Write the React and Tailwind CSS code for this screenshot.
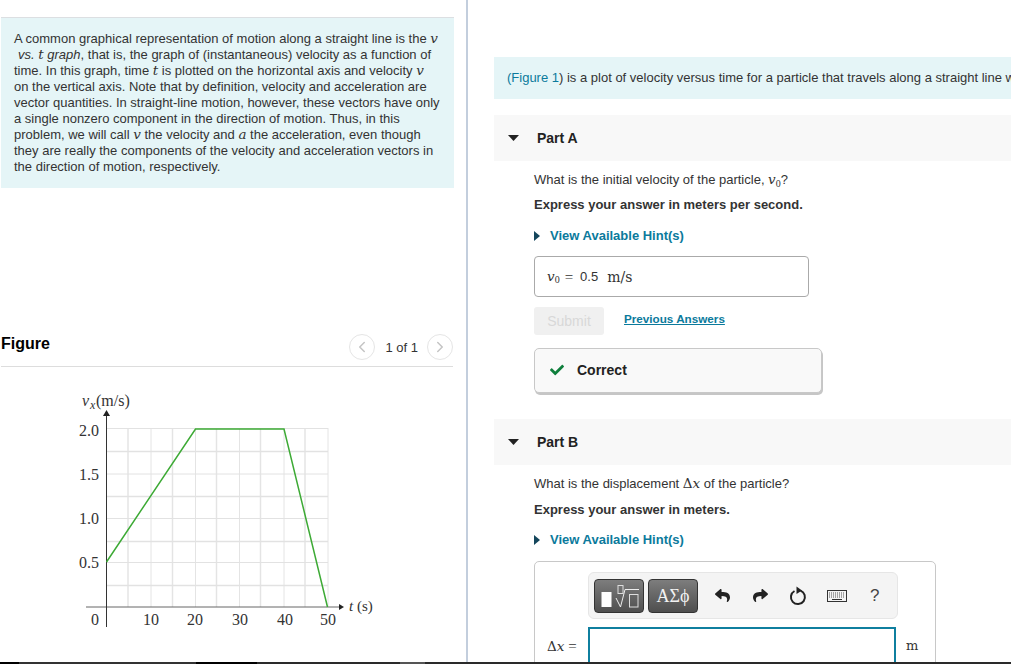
import { ChevronLeft, ChevronRight } from 'lucide-react';
import { FaCheck, FaReply, FaShare } from 'react-icons/fa';

const sans = { fontFamily: '"Liberation Sans", Arial, sans-serif' };

function MathVar({ children }) {
  return <span className="font-['DejaVu_Serif',serif] italic text-[13.5px] leading-none">{children}</span>;
}

function MathSub() {
  return <span className="font-['Liberation_Serif',serif] text-[10px] leading-none relative top-[3px]">0</span>;
}

function DownTriangle() {
  return (
    <svg width="11" height="6" viewBox="0 0 11 6" className="shrink-0">
      <polygon points="0,0 11,0 5.5,6" fill="#222" />
    </svg>
  );
}

function PartHeader({ title }) {
  return (
    <div className="h-[46px] flex items-center pl-[14px] bg-[#f8f8f8]">
      <DownTriangle />
      <span className="ml-[18px] font-bold text-[14px] text-[#222]">{title}</span>
    </div>
  );
}

function HintLink() {
  return (
    <div className="flex items-center h-4 font-bold text-[#0b7a9c]">
      <svg width="6" height="10" viewBox="0 0 6 10" className="mr-[10px]">
        <polygon points="0,0 6,5 0,10" fill="#14465c" />
      </svg>
      View Available Hint(s)
    </div>
  );
}

function PagerButton({ children }) {
  return (
    <div className="w-[26px] h-[26px] rounded-full border border-[#e5e5e5] flex items-center justify-center text-[#c4c4c4]">
      {children}
    </div>
  );
}

function VelocityGraph() {
  const vertical = [128, 151, 172.5, 195.5, 216.5, 239.5, 260.5, 284, 305, 328];
  const horizontal = [428.5, 451.5, 474, 496.5, 518.5, 541.5, 562.5, 585.5];
  const yLabels = [['2.0', 431], ['1.5', 475], ['1.0', 519], ['0.5', 563]];
  const xLabels = [['10', 151], ['20', 195], ['30', 240], ['40', 285], ['50', 328]];
  return (
    <svg viewBox="0 367 466 295" className="block w-[466px] h-[295px]" fontFamily="'Liberation Serif', serif" fill="#333">
      {vertical.map((x, i) => (
        <line key={x} x1={x} x2={x} y1="428" y2="607" stroke="#e4e4e4" strokeWidth={i % 2 === 0 ? 1.5 : 1} />
      ))}
      {horizontal.map((y, i) => (
        <line key={y} x1="106" x2="328" y1={y} y2={y} stroke="#e2e2e2" strokeWidth={i % 2 === 0 ? 1 : 1.4} />
      ))}
      <line x1="86" x2="342" y1="607" y2="607" stroke="#666" strokeWidth="1" />
      <line x1="106.5" x2="106.5" y1="413" y2="627" stroke="#333" strokeWidth="1" />
      <polygon points="106.5,410 103,416 110,416" fill="#222" />
      <polygon points="344,607 339,604 339,610" fill="#222" />
      <polyline points="106.5,562 195.5,429 284,429 327.5,607" fill="none" stroke="#3daa35" strokeWidth="1.5" />
      <text x="82" y="406" fontSize="16" fontStyle="italic">v</text>
      <text x="90" y="409" fontSize="12" fontStyle="italic">x</text>
      <text x="96" y="406" fontSize="16">(m/s)</text>
      {yLabels.map(([label, y]) => (
        <text key={label} x="79" y={y + 5} fontSize="16">{label}</text>
      ))}
      <text x="91" y="625" fontSize="16">0</text>
      {xLabels.map(([label, x]) => (
        <text key={label} x={x} y="625" fontSize="16" textAnchor="middle">{label}</text>
      ))}
      <text x="349" y="611" fontSize="15" fontStyle="italic">t</text>
      <text x="357" y="611" fontSize="15">(s)</text>
    </svg>
  );
}

function TemplateIcon() {
  return (
    <svg width="48" height="32" viewBox="595 579 48 32">
      <rect x="601.5" y="591" width="10" height="15" fill="#fff" />
      <rect x="618" y="584.5" width="5" height="8" fill="none" stroke="#ddd" strokeWidth="1" />
      <path d="M616 597 L620.5 606 L625 588.5 H639" fill="none" stroke="#eee" strokeWidth="1" />
      <rect x="629.5" y="593.5" width="8.5" height="12.5" fill="none" stroke="#ddd" strokeWidth="1" />
    </svg>
  );
}

function ResetIcon() {
  return (
    <svg width="18" height="20" viewBox="0 0 18 20">
      <path d="M11.5 4.6 A7 7 0 1 1 5.5 5" fill="none" stroke="#222" strokeWidth="2" />
      <polygon points="7.5,0.5 13,4.5 7.5,8" fill="#222" />
    </svg>
  );
}

function KeyboardIcon() {
  return (
    <svg width="20" height="12" viewBox="0 0 20 12">
      <rect x="0.5" y="0.5" width="19" height="11" fill="#f4f4f4" stroke="#333" />
      <path d="M2 3h16M2 5h16M2 7h16" stroke="#555" strokeWidth="1" strokeDasharray="1 1" />
      <path d="M5 9.5h10" stroke="#333" strokeWidth="1" />
    </svg>
  );
}

function MathToolbar() {
  const darkButton = 'h-[34px] rounded-[4px] border border-[#333] bg-gradient-to-b from-[#7d7d7d] to-[#4f4f4f] flex items-center justify-center';
  return (
    <div className="w-[310px] h-[47px] rounded-[6px] border border-[#e6e6e6] bg-[#f4f4f4] flex items-center pl-[5px]">
      <div className={`${darkButton} w-[50px]`}>
        <TemplateIcon />
      </div>
      <div className={`${darkButton} w-[50px] ml-[4px] font-['Liberation_Serif',serif] text-[18px] text-[#f2f2f2]`}>
        ΑΣϕ
      </div>
      <div className="ml-[15px] w-[18px] flex justify-center text-[#222]"><FaReply size={15} /></div>
      <div className="ml-[20px] w-[18px] flex justify-center text-[#222]"><FaShare size={15} /></div>
      <div className="ml-[20px] w-[18px] flex justify-center"><ResetIcon /></div>
      <div className="ml-[21px] w-[20px] flex justify-center -translate-x-px"><KeyboardIcon /></div>
      <div className="ml-[22px] text-[17px] text-[#444]">?</div>
    </div>
  );
}

export default function App() {
  return (
    <div className="w-[1011px] h-[664px] overflow-hidden flex flex-col bg-white text-[13px] leading-4 text-[#333]" style={sans}>
      <div className="flex h-[662px] overflow-hidden">
        {/* left: intro and figure */}
        <div className="w-[468px] shrink-0 border-r-2 border-[#c3cedd] pt-[17px]">
          <div className="ml-px w-[453px] h-[171px] bg-[#e5f5f7] border-t border-[#dcdfe2] pl-[13px] pt-[13px]">
            <p className="h-4 whitespace-nowrap">A common graphical representation of motion along a straight line is the <MathVar>v</MathVar></p>
            <p className="h-4 whitespace-nowrap pl-1"><em>vs.</em> <MathVar>t</MathVar> <em>graph</em>, that is, the graph of (instantaneous) velocity as a function of</p>
            <p className="h-4 whitespace-nowrap">time. In this graph, time <MathVar>t</MathVar> is plotted on the horizontal axis and velocity <MathVar>v</MathVar></p>
            <p className="h-4 whitespace-nowrap">on the vertical axis. Note that by definition, velocity and acceleration are</p>
            <p className="h-4 whitespace-nowrap">vector quantities. In straight-line motion, however, these vectors have only</p>
            <p className="h-4 whitespace-nowrap">a single nonzero component in the direction of motion. Thus, in this</p>
            <p className="h-4 whitespace-nowrap">problem, we will call <MathVar>v</MathVar> the velocity and <MathVar>a</MathVar> the acceleration, even though</p>
            <p className="h-4 whitespace-nowrap">they are really the components of the velocity and acceleration vectors in</p>
            <p className="h-4 whitespace-nowrap">the direction of motion, respectively.</p>
          </div>
          <div className="mt-[146px] ml-px w-[452px] h-[33px] border-b border-[#dddddd] flex items-start justify-between">
            <span className="mt-px font-bold text-[16px] leading-[18px] text-black">Figure</span>
            <div className="flex items-center">
              <PagerButton><ChevronLeft size={18} strokeWidth={2} /></PagerButton>
              <span className="ml-[10px] mr-[9px] mt-px text-[13px]">1 of 1</span>
              <PagerButton><ChevronRight size={18} strokeWidth={2} /></PagerButton>
            </div>
          </div>
          <VelocityGraph />
        </div>

        {/* right: question parts */}
        <div className="flex-1 min-w-0 overflow-hidden pl-[26px] pt-[57px]">
          <div className="h-[42px] flex items-center pl-[13px] bg-[#e5f5f7] overflow-hidden whitespace-nowrap">
            <span><span className="text-[#0b7a9c]">(Figure 1</span>) is a plot of velocity versus time for a particle that travels along a straight line with</span>
          </div>

          <div className="mt-[16px]"><PartHeader title="Part A" /></div>
          <div className="pl-[40px]">
            <p className="mt-[11px] h-4 whitespace-nowrap">What is the initial velocity of the particle, <MathVar>v</MathVar><MathSub />?</p>
            <p className="mt-[9px] h-4 font-bold">Express your answer in meters per second.</p>
            <div className="mt-[15px]"><HintLink /></div>
            <div className="mt-[12px] w-[275px] h-[41px] rounded-[4px] border border-[#aaaaaa] flex items-center pl-[12px]">
              <MathVar>v</MathVar><MathSub />
              <span className="ml-[5px] font-['Liberation_Serif',serif] text-[15px]">=</span>
              <span className="ml-[7px] text-[13px]">0.5</span>
              <span className="ml-[9px] font-['DejaVu_Serif',serif] text-[14px]">m/s</span>
            </div>
            <div className="mt-[10px] flex items-center">
              <div className="w-[70px] h-[28px] rounded-[3px] bg-[#f0f0f0] text-[14px] text-[#d8d8d8] flex items-center justify-center">Submit</div>
              <span className="ml-[20px] -mt-[4px] font-bold text-[11.7px] text-[#0b7a9c] underline">Previous Answers</span>
            </div>
            <div className="mt-[13px] w-[288px] h-[45px] rounded-[5px] border border-[#c8c8c8] bg-[#f9f9f9] shadow-[1px_2px_0_#c6c6c6] flex items-center pl-[15px] pb-[2px]">
              <FaCheck size={14} className="text-[#0f7f3c]" />
              <span className="ml-[13px] font-bold text-[14px] text-[#222]">Correct</span>
            </div>
          </div>

          <div className="mt-[26px]"><PartHeader title="Part B" /></div>
          <div className="pl-[40px]">
            <p className="mt-[11px] h-4 whitespace-nowrap">What is the displacement <span className="font-['DejaVu_Serif',serif] text-[13.5px] leading-none">Δ</span><MathVar>x</MathVar> of the particle?</p>
            <p className="mt-[10px] h-4 font-bold">Express your answer in meters.</p>
            <div className="mt-[14px]"><HintLink /></div>
            <div className="mt-[13px] w-[402px] h-[120px] rounded-[5px] border border-[#c8c8c8] pl-[53px] pt-[10px] relative">
              <MathToolbar />
              <div className="mt-[8px] flex">
                <div className="-ml-[41px] w-[41px] pt-[11px] whitespace-nowrap text-[13.5px]">
                  <span className="font-['DejaVu_Serif',serif]">Δ</span><MathVar>x</MathVar> <span className="font-['Liberation_Serif',serif] text-[15px]">=</span>
                </div>
                <div className="w-[308px] h-[60px] border-2 border-[#0f7f9f] bg-white" />
                <span className="ml-[10px] pt-[11px] font-['DejaVu_Serif',serif] text-[13px]">m</span>
              </div>
            </div>
          </div>
        </div>
      </div>

      {/* strip along the bottom edge */}
      <div className="h-[2px] flex">
        <div className="w-[19px] bg-black" />
        <div className="w-[177px] bg-[#333333]" />
        <div className="w-[61px] bg-black" />
        <div className="w-[143px] bg-[#2a2a2a]" />
        <div className="w-[25px] bg-[#555555]" />
        <div className="flex-1 bg-[#2a2a2a]" />
      </div>
    </div>
  );
}
